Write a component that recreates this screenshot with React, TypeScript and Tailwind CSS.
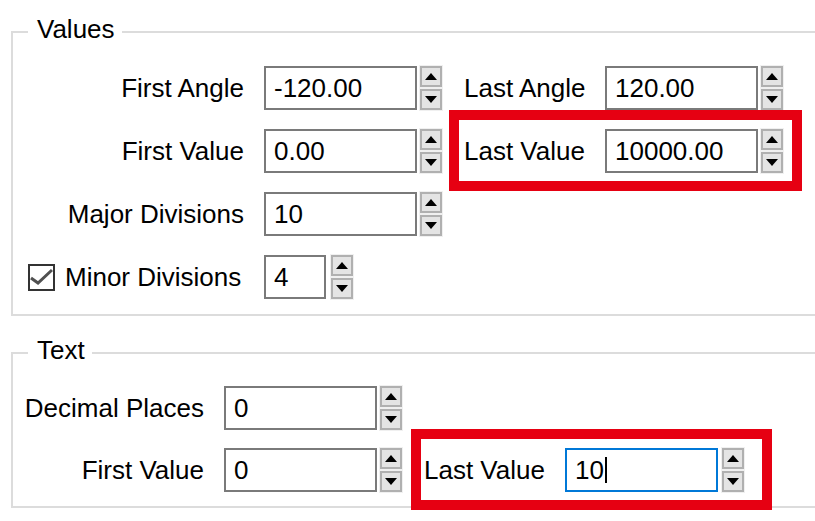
const Spin = ({ className = '' }: { className?: string }) => (
  <div className={`flex h-[46px] w-[24px] flex-col gap-[2px] bg-[#f0f0f0] p-[1px] ${className}`}>
    {['up', 'down'].map((dir) => (
      <div
        key={dir}
        className="flex flex-1 items-center justify-center border-2 border-[#b0b0b0] bg-[#e4e4e4]"
      >
        <svg width="12" height="7" viewBox="0 0 12 7">
          {dir === 'up' ? <path d="M0 7 L6 0 L12 7 Z" fill="#000" /> : <path d="M0 0 L12 0 L6 7 Z" fill="#000" />}
        </svg>
      </div>
    ))}
  </div>
);

const Field = ({
  value,
  className = '',
  focused = false,
}: {
  value: string;
  className?: string;
  focused?: boolean;
}) => (
  <div
    className={`flex h-[44px] items-center border-2 bg-white pl-[8px] ${
      focused ? 'border-[#0078d7]' : 'border-[#7a7a7a]'
    } ${className}`}
  >
    <span>{value}</span>
    {focused && <span className="ml-[1px] inline-block h-[26px] w-[2px] bg-black" />}
  </div>
);

const Checkbox = () => (
  <div className="h-[27px] w-[27px] border-2 border-[#333333] bg-white">
    <svg width="23" height="23" viewBox="0 0 23 23">
      <path d="M1 12 L8 17 L22 4" fill="none" stroke="#505050" strokeWidth="3" />
    </svg>
  </div>
);

const legendClass = 'ml-[15px] pl-[9px] pr-[7px] pb-[6px] leading-[30px]';

export default function App() {
  return (
    <div className="relative h-[521px] w-[815px] overflow-hidden bg-white pt-[14px] font-['Liberation_Sans',Arial,sans-serif] text-[26px] text-black">
      <fieldset className="ml-[11px] w-[840px] border-2 border-[#dcdcdc] pt-[16px] pb-[15px]">
        <legend className={legendClass}>Values</legend>
        <div className="flex flex-col gap-[19px]">
          <div className="flex h-[44px] items-center">
            <span className="w-[231px] text-right">First Angle</span>
            <Field value="-120.00" className="ml-[20px] w-[153px]" />
            <Spin className="ml-[2px]" />
            <span className="ml-[21px] w-[141px]">Last Angle</span>
            <Field value="120.00" className="w-[153px]" />
            <Spin className="ml-[2px]" />
          </div>
          <div className="flex h-[44px] items-center">
            <span className="w-[231px] text-right">First Value</span>
            <Field value="0.00" className="ml-[20px] w-[153px]" />
            <Spin className="ml-[2px]" />
            <span className="ml-[21px] w-[141px]">Last Value</span>
            <Field value="10000.00" className="w-[153px]" />
            <Spin className="ml-[2px]" />
          </div>
          <div className="flex h-[44px] items-center">
            <span className="w-[231px] text-right">Major Divisions</span>
            <Field value="10" className="ml-[20px] w-[153px]" />
            <Spin className="ml-[2px]" />
          </div>
          <div className="flex h-[44px] items-center">
            <div className="flex w-[231px] items-center pl-[15px]">
              <Checkbox />
              <span className="ml-[10px]">Minor Divisions</span>
            </div>
            <Field value="4" className="ml-[20px] w-[62px]" />
            <Spin className="ml-[4px]" />
          </div>
        </div>
      </fieldset>

      <fieldset className="mt-[19px] ml-[11px] w-[840px] border-2 border-[#dcdcdc] pt-[15px] pb-[14px]">
        <legend className={legendClass}>Text</legend>
        <div className="flex flex-col gap-[18px]">
          <div className="flex h-[44px] items-center">
            <span className="w-[191px] pl-[4px] text-right">Decimal Places</span>
            <Field value="0" className="ml-[20px] w-[153px]" />
            <Spin className="ml-[2px]" />
          </div>
          <div className="flex h-[44px] items-center">
            <span className="w-[191px] text-right">First Value</span>
            <Field value="0" className="ml-[20px] w-[153px]" />
            <Spin className="ml-[2px]" />
            <span className="ml-[21px] w-[141px]">Last Value</span>
            <Field value="10" focused className="w-[153px]" />
            <Spin className="ml-[3px]" />
          </div>
        </div>
      </fieldset>

      {/* highlight annotations */}
      <div className="pointer-events-none absolute left-[449px] top-[110px] h-[81px] w-[353px] border-[10px] border-[#e60012]" />
      <div className="pointer-events-none absolute left-[411px] top-[429px] h-[81px] w-[361px] border-[10px] border-[#e60012]" />
    </div>
  );
}
